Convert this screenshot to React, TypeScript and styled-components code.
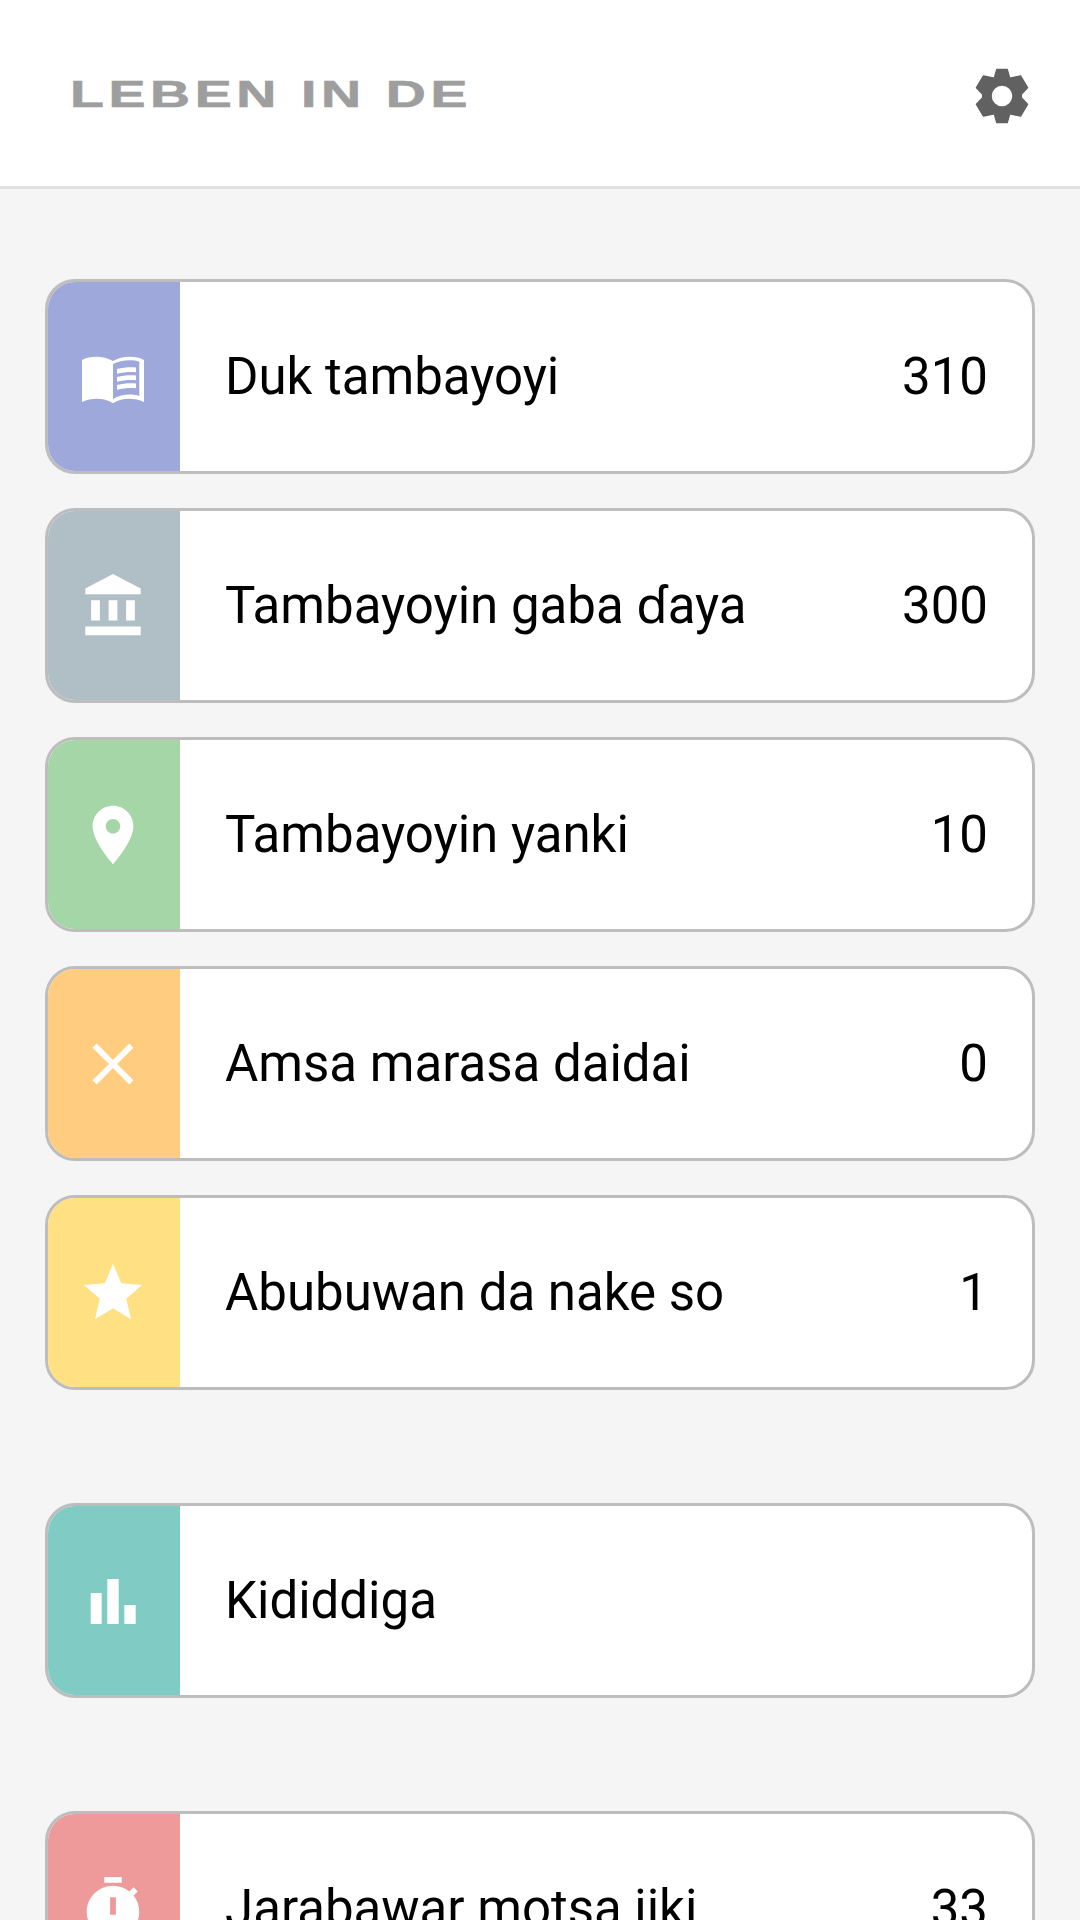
import React from "react";
import styled, { createGlobalStyle } from "styled-components";

const Global = createGlobalStyle`
  html, body { margin: 0; padding: 0; background: #f5f5f5; }
  body { width: 1080px; height: 1920px; overflow: hidden; font-family: Roboto, "Noto Sans", sans-serif; }
`;

const Page = styled.div`
  width: 1080px;
  height: 1920px;
  overflow: hidden;
  background: #f5f5f5;
`;

const Header = styled.header`
  height: 186px;
  box-sizing: content-box;
  background: #fff;
  border-bottom: 3px solid #e0e0e0;
  display: flex;
  align-items: center;
  justify-content: space-between;
  padding: 0 50px 0 70px;
`;

const Logo = styled.div`
  font-family: "Liberation Sans", Arial, sans-serif;
  font-weight: 700;
  font-size: 36px;
  line-height: 36px;
  letter-spacing: 3px;
  color: #9e9e9e;
  white-space: nowrap;
  transform: scaleX(1.54);
  transform-origin: left center;
  margin-top: 3px;
  -webkit-text-stroke: 0.6px #9e9e9e;
`;

const GearIcon = styled.svg`
  width: 56px;
  height: 56px;
  fill: #616161;
  display: block;
  margin-top: 6px;
`;

const Main = styled.main`
  padding: 90px 45px 0;
  display: flex;
  flex-direction: column;
  gap: 113px;
`;

const Group = styled.section`
  display: flex;
  flex-direction: column;
  gap: 34px;
`;

const Card = styled.div`
  height: 195px;
  box-sizing: border-box;
  border: 3px solid #bdbdbd;
  border-radius: 30px;
  background: #fff;
  overflow: hidden;
  display: flex;
  align-items: stretch;
`;

const IconPanel = styled.div<{ $color: string }>`
  width: 132px;
  flex: none;
  box-sizing: border-box;
  padding-right: 2px;
  background: ${(p) => p.$color};
  display: flex;
  align-items: center;
  justify-content: center;
`;

const PanelIcon = styled.svg<{ $w: number; $h: number }>`
  width: ${(p) => p.$w}px;
  height: ${(p) => p.$h}px;
  fill: #fff;
  display: block;
`;

const Body = styled.div`
  flex: 1;
  display: flex;
  align-items: center;
  justify-content: space-between;
  padding: 0 44px 0 45px;
  font-size: 51px;
  line-height: 60px;
  color: #000;
`;

const Label = styled.span`
  display: block;
  height: 60px;
`;
const Count = styled.span`
  display: block;
  height: 60px;
`;

type IconDef = { box: string; w: number; h: number; body: React.ReactNode };

const std = (body: React.ReactNode): IconDef => ({ box: "0 0 24 24", w: 70, h: 70, body });

const icons: Record<string, IconDef> = {
  book: {
    box: "0 -8 62 59",
    w: 62,
    h: 59,
    body: (
      <path
        fillRule="evenodd"
        d="M0 5C8 .5 22 .5 31 6C40 .5 54 .5 62 5V47C52 42.5 40 42.5 31 48.3C22 42.5 10 42.5 0 47ZM31 9V44C39 39 50 38.5 57.3 41V6.7C50 4 38 5 31 9ZM35 14V18.8C41 17.3 48 16.8 54 17.3V12.5C48 12 41 12.5 35 14ZM35 22V26.8C41 25.3 48 24.8 54 25.3V20.5C48 20 41 20.5 35 22ZM35 30V34.8C41 33.3 48 32.8 54 33.3V28.5C48 28 41 28.5 35 30Z"
      />
    ),
  },
  bank: std(<path d="M4 10v7h3v-7H4zm6 0v7h3v-7h-3zM2 22h19v-3H2v3zm14-12v7h3v-7h-3zm-4.5-9L2 6v2h19V6l-9.5-5z" transform="translate(0.5 0)" />),
  pin: std(<path d="M12 2C8.13 2 5 5.13 5 9c0 5.25 7 13 7 13s7-7.75 7-13c0-3.87-3.13-7-7-7zm0 9.5c-1.38 0-2.5-1.12-2.5-2.5s1.12-2.5 2.5-2.5 2.5 1.12 2.5 2.5-1.12 2.5-2.5 2.5z" />),
  close: std(<path d="M19 6.41L17.59 5 12 10.59 6.41 5 5 6.41 10.59 12 5 17.59 6.41 19 12 13.41 17.59 19 19 17.59 13.41 12z" />),
  star: std(<path d="M12 17.27L18.18 21l-1.64-7.03L22 9.24l-7.19-.61L12 2 9.19 8.63 2 9.24l5.46 4.73L5.82 21z" />),
  bars: {
    box: "0 0 70 70",
    w: 70,
    h: 70,
    body: <path d="M12.7 27h11v31h-11zM29.3 13h11.4v45H29.3zM46.3 39h11.4v19H46.3z" />,
  },
  timer: std(
    <path
      fillRule="evenodd"
      d="M15 1H9v2h6V1zm4.03 6.39l1.42-1.42c-.43-.51-.9-.99-1.41-1.41l-1.42 1.42C16.07 4.74 14.12 4 12 4c-4.97 0-9 4.03-9 9s4.02 9 9 9 9-4.03 9-9c0-2.12-.74-4.07-1.97-5.61zM11 8h2v6h-2V8z"
    />
  ),
};

const Row = ({ color, icon, label, count }: { color: string; icon: string; label: string; count?: string }) => {
  const def = icons[icon];
  return (
    <Card>
      <IconPanel $color={color}>
        <PanelIcon viewBox={def.box} $w={def.w} $h={def.h}>
          {def.body}
        </PanelIcon>
      </IconPanel>
      <Body>
        <Label>{label}</Label>
        {count && <Count>{count}</Count>}
      </Body>
    </Card>
  );
};

export default function App() {
  return (
    <Page>
      <Global />
      <Header>
        <Logo>LEBEN IN DE</Logo>
        <GearIcon viewBox="-28 -28 56 56">
          <path
            fillRule="evenodd"
            stroke="#616161"
            strokeWidth="1.5"
            strokeLinejoin="round"
            d="M-5.2 -26.5H5.2L7.7 -17.7L18.5 -20L25.5 -8.3L19.3 -1.7V1.7L25.5 8.3L18.5 20L7.7 17.7L5.2 26.5H-5.2L-7.7 17.7L-18.5 20L-25.5 8.3L-19.3 1.7V-1.7L-25.5 -8.3L-18.5 -20L-7.7 -17.7ZM0 -11A11 11 0 1 0 0 11A11 11 0 1 0 0 -11Z"
          />
        </GearIcon>
      </Header>
      <Main>
        <Group>
          <Row color="#9fa8da" icon="book" label="Duk tambayoyi" count="310" />
          <Row color="#b0bec5" icon="bank" label="Tambayoyin gaba ɗaya" count="300" />
          <Row color="#a5d6a7" icon="pin" label="Tambayoyin yanki" count="10" />
          <Row color="#ffcc80" icon="close" label="Amsa marasa daidai" count="0" />
          <Row color="#ffe082" icon="star" label="Abubuwan da nake so" count="1" />
        </Group>
        <Group>
          <Row color="#80cbc4" icon="bars" label="Kididdiga" />
        </Group>
        <Group>
          <Row color="#ef9a9a" icon="timer" label="Jarabawar motsa jiki" count="33" />
        </Group>
      </Main>
    </Page>
  );
}
